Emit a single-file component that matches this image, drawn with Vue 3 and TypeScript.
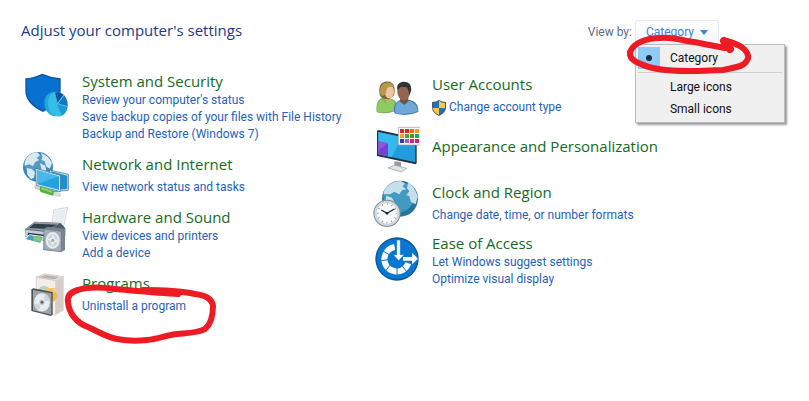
<script setup lang="ts">
import { ref } from 'vue'

interface Category {
  id: string
  title: string
  links: string[]
  shielded?: boolean
}

const left: Category[] = [
  {
    id: 'security',
    title: 'System and Security',
    links: [
      "Review your computer's status",
      'Save backup copies of your files with File History',
      'Backup and Restore (Windows 7)',
    ],
  },
  { id: 'network', title: 'Network and Internet', links: ['View network status and tasks'] },
  { id: 'hardware', title: 'Hardware and Sound', links: ['View devices and printers', 'Add a device'] },
  { id: 'programs', title: 'Programs', links: ['Uninstall a program'] },
]

const right: Category[] = [
  { id: 'users', title: 'User Accounts', links: ['Change account type'], shielded: true },
  { id: 'appearance', title: 'Appearance and Personalization', links: [] },
  { id: 'clock', title: 'Clock and Region', links: ['Change date, time, or number formats'] },
  { id: 'access', title: 'Ease of Access', links: ['Let Windows suggest settings', 'Optimize visual display'] },
]

const columns = [left, right]
const views = ['Category', 'Large icons', 'Small icons']
const view = ref('Category')
const open = ref(true)

const viewBoxes: Record<string, string> = {
  security: '21 21 144 144',
  network: '21 21 144 144',
  hardware: '21 21 144 144',
  programs: '21 15 144 144',
  users: '12 6 144 144',
  appearance: '12 12 144 144',
  clock: '12 6 144 144',
  access: '12 12 144 144',
}

const swatches = [
  '#e8202c', '#e8202c', '#f0691c', '#f49a1c',
  '#f4a21c', '#3fa83c', '#4b9b1c', '#14a878',
  '#3434c8', '#9a62c0', '#dc1c78', '#d81c70',
]

function choose(name: string) {
  view.value = name
  open.value = false
}
</script>

<template>
  <main class="panel">
    <header class="top">
      <h1>Adjust your computer's settings</h1>
      <div class="viewby">
        <span id="viewby-label">View by:</span>
        <div class="picker">
          <button
            class="trigger"
            type="button"
            aria-haspopup="menu"
            aria-labelledby="viewby-label"
            :aria-expanded="open"
            @click="open = !open"
          >
            {{ view }}
            <svg class="caret" viewBox="0 0 8 5" aria-hidden="true"><path d="M0 0h8L4 5z" /></svg>
          </button>
          <div v-if="open" class="menu" role="menu">
            <template v-for="(name, i) in views" :key="name">
              <button
                class="item"
                type="button"
                role="menuitemradio"
                :aria-checked="view === name"
                @click="choose(name)"
              >
                <span class="mark" :class="{ on: view === name }"></span>
                <span>{{ name }}</span>
              </button>
              <hr v-if="i === 0" class="rule" />
            </template>
          </div>
          <svg class="ring ring-view" viewBox="0 0 128 40" aria-hidden="true">
            <path d="M99 14 C88 12 75 9 61 7 C52 5 43 3 34 4 C22 4 8 8 4 18 C3 25 9 28 15 30 C25 35 42 37 61 37 C78 37 88 36 97 36 C108 34 114 33 118 30 C124 25 123 20 118 15 C114 11 108 9 101 7" />
            <path class="thick" d="M98 7 L104 15" />
          </svg>
        </div>
      </div>
    </header>

    <div class="columns">
      <div v-for="(column, c) in columns" :key="c" class="column">
        <section v-for="cat in column" :key="cat.id" class="category">
          <svg class="icon" :viewBox="viewBoxes[cat.id]" aria-hidden="true">
            <g v-if="cat.id === 'security'">
              <path d="M31 43 Q55 41 82 29 Q110 41 137 43 V82 C137 108 116 128 84 144 C52 130 31 107 31 82Z" fill="#0b569f" />
              <path d="M35 47 Q59 45 82 34 Q109 45 133 47 V82 C133 105 113 125 84 139 C55 126 35 105 35 82Z" fill="#0870d0" />
              <ellipse cx="119" cy="120" rx="31" ry="37" transform="rotate(-12 119 120)" fill="#24a5df" />
              <ellipse cx="128" cy="121" rx="29" ry="37" transform="rotate(-12 128 121)" fill="#35bce9" />
              <path d="M126 119 L119 87 Q133 80 146 92Z" fill="#0b549f" />
              <path d="M129 120 L148 94 Q159 109 158 127Z" fill="#1475c2" />
              <path d="M126 120 L158 128 Q155 146 140 154Z" fill="#1b9bd6" />
              <path d="M119 87 L127 119 L158 128 M127 119 L147 93" fill="none" stroke="#5bd0f3" stroke-width="2" />
            </g>

            <g v-else-if="cat.id === 'network'">
              <circle cx="69" cy="69" r="45" fill="#3d88b5" />
              <circle cx="61" cy="60" r="32" fill="#63a9ce" opacity=".55" />
              <path d="M35 42 Q48 25 67 25 L75 34 65 42 73 48 60 55 54 67 43 61 29 65Q27 53 35 42M77 27 Q100 34 111 56 L105 74 94 68 89 52 79 48 83 38ZM35 72 50 75 60 84 57 101 48 106 37 92ZM75 58 91 65 94 80 80 77Z" fill="#d8e9f0" />
              <path d="M103 78 L160 91 V139 L115 143 103 132Z" fill="#d2e8f2" stroke="#2b6688" stroke-width="2" />
              <path d="M108 82 L157 95 V135 L113 139Z" fill="#218ed0" />
              <path d="M61 73 L136 94 V143 L64 124Z" fill="#e6f3f7" stroke="#326983" stroke-width="2" />
              <path d="M65 78 L132 97 V138 L67 121Z" fill="#24a2df" />
              <path d="M65 78 L132 97 L67 120Z" fill="#5bc0ec" opacity=".7" />
              <path d="M60 125 L77 128 V138 L60 134Z" fill="#cdd4d4" stroke="#929b9b" />
              <path d="M77 127 L116 140 Q120 148 113 155 L77 144Q71 135 77 127" fill="#55ad42" />
              <path d="M79 130 L111 141 V147 L78 136Z" fill="#89d66c" />
              <path d="M116 143 L136 148 V157 L116 154Z" fill="#dce2e1" stroke="#9ba4a3" />
            </g>

            <g v-else-if="cat.id === 'hardware'">
              <path d="M111 67 L117 29 L158 22 L145 83Z" fill="#f4f7f9" stroke="#c0c8cf" stroke-width="2" />
              <path d="M120 33 L153 27 L142 76 L115 67Z" fill="#e6ecf1" />
              <path d="M31 87 L59 65 L137 69 L151 85 V107 L101 125 L32 111Z" fill="#515b65" />
              <path d="M32 87 L60 65 L136 69 L96 94Z" fill="#8f9ba6" />
              <path d="M57 71 L126 74 L101 87 L42 84Z" fill="#303d47" />
              <path d="M32 89 L95 96 V121 L32 110Z" fill="#c6ced5" />
              <path d="M39 98 L87 104 V112 L38 105Z" fill="#26333e" />
              <path d="M43 104 L86 110 L76 130 L30 118Z" fill="#40a1d0" stroke="#eef4f6" stroke-width="3" />
              <path d="M53 108 L82 113 L75 125 L57 122Z" fill="#8bc965" />
              <path d="M87 87 L97 80 L150 86 V150 L139 155 L86 149Z" fill="#778592" />
              <path d="M87 87 L139 94 V155 L86 149Z" fill="#a5afb9" stroke="#64727f" stroke-width="2" />
              <ellipse cx="113" cy="121" rx="23" ry="27" fill="#dce2e6" stroke="#8b969f" stroke-width="2" />
              <ellipse cx="113" cy="121" rx="17" ry="21" fill="#ccd4d9" stroke="#f4f6f7" stroke-width="3" />
              <path d="M113 103 L119 116 130 124 117 127 110 139 108 124 97 117 109 115Z" fill="#eef1f3" />
              <circle cx="113" cy="121" r="5" fill="#9ca9b3" />
            </g>

            <g v-else-if="cat.id === 'programs'">
              <path d="M64 36 L90 26 L146 35 L123 47Z" fill="#e3dfdb" stroke="#c8c2bc" stroke-width="2" />
              <path d="M72 37 L93 30 L132 36 L119 43Z" fill="#b8b3ae" />
              <path d="M64 37 L122 47 V150 L64 137Z" fill="#f2eee9" stroke="#c8c2bc" stroke-width="2" />
              <path d="M122 47 L146 36 V136 L122 150Z" fill="#d6cec6" />
              <circle cx="87" cy="79" r="17" fill="#b9d5c3" />
              <circle cx="108" cy="93" r="18" fill="#f6b64d" />
              <path d="M94 69h26v15H94z" fill="#f3c96c" />
              <path d="M49 73 L55 70 L113 81 V149 L108 153 L49 138Z" fill="#4b5155" />
              <path d="M54 75 L109 85 V149 L54 136Z" fill="#9ca4a8" />
              <ellipse cx="81" cy="112" rx="25" ry="29" fill="#e8ecee" stroke="#8b9296" stroke-width="2" />
              <path d="M81 112 L92 86 A25 29 0 0 1 105 106ZM81 112 L70 138 A25 29 0 0 1 57 119Z" fill="#ccd5d8" />
              <ellipse cx="81" cy="112" rx="9" ry="10" fill="#b7c0c4" stroke="#fff" stroke-width="2" />
              <circle cx="81" cy="112" r="4" fill="#596268" />
            </g>

            <g v-else-if="cat.id === 'users'">
              <path d="M26 130 Q22 99 39 88 L55 83 80 94 Q90 107 84 126Q51 137 26 130" fill="#78b454" />
              <path d="M28 128 Q25 103 40 91 L51 101 60 88 76 94 84 122Q53 133 28 128" fill="#91c963" />
              <path d="M47 77 H69 V91 Q60 101 49 91Z" fill="#dca987" />
              <path d="M35 78 Q29 42 51 38 Q75 34 79 55 Q82 73 76 82 L62 91 Q40 91 35 78" fill="#80652e" />
              <ellipse cx="64" cy="68" rx="14" ry="20" fill="#f0c5a7" />
              <path d="M36 65 Q37 43 55 41 Q73 38 78 55 Q62 50 57 59 Q56 72 47 80Q35 82 36 65" fill="#b59a4c" />
              <path d="M79 133 Q73 107 91 95 L103 90 130 94 Q153 103 151 129 Q117 144 79 133" fill="#477eaf" />
              <path d="M82 132 Q78 106 94 97 L109 108 124 95 Q148 103 149 127Q116 140 82 132" fill="#70a9d8" />
              <path d="M96 81 H121 V96 L109 107 96 97Z" fill="#765141" />
              <ellipse cx="107" cy="68" rx="19" ry="26" fill="#926650" />
              <path d="M88 64 Q83 42 105 38 Q131 37 130 63 L124 80 Q122 60 116 55 L99 53Z" fill="#303438" />
            </g>

            <g v-else-if="cat.id === 'appearance'">
              <path d="M79 121 L99 123 V138 L79 136Z" fill="#91999f" />
              <path d="M61 141 L80 132 L116 142 L100 153Z" fill="#e0e4e7" stroke="#8b969e" stroke-width="2" />
              <path d="M27 29 L32 27 L146 52 V126 L143 130 L27 105Z" fill="#26323d" />
              <path d="M31 33 L142 57 V124 L31 100Z" fill="#239bdc" />
              <path d="M31 33 L101 48 L71 109 L31 100Z" fill="#35b8ed" />
              <path d="M31 61 L60 67 V106 L31 100Z" fill="#7741cd" />
              <path d="M31 61 L60 67 L31 88Z" fill="#9058dd" />
              <path d="M91 19 H158 V72 H91Z" fill="#f7f7f7" stroke="#9d9d9d" stroke-width="2" />
              <rect
                v-for="(color, s) in swatches"
                :key="s"
                :x="96 + (s % 4) * 15"
                :y="24 + Math.floor(s / 4) * 15"
                width="12"
                height="12"
                :fill="color"
              />
            </g>

            <g v-else-if="cat.id === 'clock'">
              <circle cx="96" cy="65" r="54" fill="#24749f" />
              <circle cx="92" cy="60" r="46" fill="#429ac3" />
              <path d="M57 29 Q72 12 99 12 L111 20 103 28 115 37 102 40 94 52 79 44 66 52 46 52 Q48 36 57 29M120 16 Q143 31 149 60 L143 82 129 75 124 58 115 54 124 43 117 34ZM55 56 72 62 79 75 70 79 53 68Z" fill="#c6dfea" />
              <circle cx="57" cy="109" r="41" fill="#7f8e98" />
              <circle cx="57" cy="109" r="38" fill="#d2dadd" />
              <circle cx="57" cy="109" r="33" fill="#f8f9f9" stroke="#b7c2c7" stroke-width="2" />
              <circle cx="57" cy="109" r="28" fill="none" stroke="#59666e" stroke-width="5" stroke-dasharray="2 12.66" stroke-dashoffset="1" />
              <path d="M40 99 L57 109 L79 96" fill="none" stroke="#202a31" stroke-width="4" />
              <circle cx="57" cy="109" r="4" fill="#202a31" />
            </g>

            <g v-else>
              <circle cx="87" cy="90" r="65" fill="#095596" />
              <circle cx="87" cy="90" r="61" fill="#0877d2" />
              <path d="M80 54 A37 37 0 1 0 121 103" fill="none" stroke="#fff" stroke-width="18" />
              <path d="M42 64 L64 77 M38 95 L62 92 M54 125 L69 104 M87 140 V116 M116 128 L101 109" stroke="#0877d2" stroke-width="3" />
              <path d="M86 33 H97 V77 H109 L92 95 L76 77 H86Z" fill="#fff" stroke="#0877d2" stroke-width="2" />
              <path d="M105 84 H132 V71 L150 89 L132 106 V95 H105Z" fill="#fff" />
            </g>
          </svg>

          <div class="text" :class="['links-' + cat.links.length]">
            <h2><a href="#">{{ cat.title }}</a></h2>
            <ul v-if="cat.links.length">
              <li v-for="link in cat.links" :key="link">
                <svg v-if="cat.shielded" class="uac" viewBox="0 0 14 16" aria-hidden="true">
                  <path d="M0 2 Q4 2 7 0 Q10 2 14 2 V7 Q14 13 7 16 Q0 13 0 7Z" fill="#4c5763" />
                  <path d="M1 3 Q4 3 7 1 V8 H1Z" fill="#1e6fc8" />
                  <path d="M7 1 Q10 3 13 3 V8 H7Z" fill="#fbc93d" />
                  <path d="M1 8 H7 V15 Q1 12 1 8Z" fill="#fbc93d" />
                  <path d="M7 8 H13 Q13 12 7 15Z" fill="#1e6fc8" />
                </svg>
                <a href="#">{{ link }}</a>
              </li>
            </ul>
          </div>

          <svg v-if="cat.id === 'programs'" class="ring ring-programs" viewBox="0 0 156 60" aria-hidden="true">
            <path d="M115 10 C95 9 75 7 52 5 C38 3 24 3 15 6 C8 8 4 12 5 18 C6 30 14 39 25 43 C34 47 43 53 54 55 C64 57 74 57 84 56 C95 55 104 51 114 50 C125 49 135 49 142 45 C149 39 150 30 150 22 C149 14 141 11 132 10 C118 7 104 6 80 6" />
          </svg>
        </section>
      </div>
    </div>
  </main>
</template>

<style>
body {
  margin: 0;
  background: #fff;
}
</style>

<style scoped>
.panel {
  box-sizing: border-box;
  min-height: 100vh;
  padding: 20px 21px;
  font-family: Roboto, "Open Sans", sans-serif;
  font-size: 12px;
  line-height: 17px;
}

.top {
  display: flex;
  justify-content: space-between;
  align-items: flex-start;
  height: 24px;
  padding-right: 69px;
  margin-bottom: 27px;
}

h1,
h2 {
  margin: 0;
  font-family: "Open Sans", "Noto Sans", sans-serif;
  font-size: 15px;
  font-weight: 400;
  line-height: 20px;
  white-space: nowrap;
}

h1 {
  color: #1c3a86;
}

h2 {
  margin-bottom: 1px;
}

.viewby {
  display: flex;
  align-items: center;
  gap: 3px;
  color: #5a6b85;
}

.picker {
  position: relative;
}

button {
  font: inherit;
  cursor: default;
}

.trigger {
  display: flex;
  align-items: center;
  gap: 6px;
  height: 24px;
  padding: 0 10px;
  border: 1px solid #e2ebf5;
  border-radius: 2px;
  background: linear-gradient(#fff, #f3f7fc);
  color: #4384d8;
}

.caret {
  width: 8px;
  height: 5px;
  fill: #3f82d8;
}

.menu {
  position: absolute;
  top: 24px;
  left: 0;
  z-index: 1;
  box-sizing: border-box;
  width: 150px;
  padding: 2px;
  border: 1px solid #bcbcbc;
  background: #f0f0f0;
  box-shadow: 2px 2px 2px #9c9c9c;
}

.item {
  display: flex;
  align-items: center;
  gap: 10px;
  width: 100%;
  height: 22px;
  padding: 0;
  border: 0;
  background: none;
  color: #111;
}

.mark {
  display: grid;
  place-items: center;
  width: 22px;
  height: 22px;
}

.mark.on {
  background: #91c9f7;
}

.mark.on::after {
  content: "";
  width: 6px;
  height: 6px;
  border-radius: 50%;
  background: #12303f;
}

.rule {
  margin: 3px 0;
  border: 0;
  border-top: 1px solid #d0d0d0;
}

.columns {
  display: grid;
  grid-template-columns: minmax(0, 350px) minmax(0, 1fr);
  padding-left: 1px;
}

.column {
  display: flex;
  flex-direction: column;
  gap: 8px;
}

.column + .column {
  gap: 6px;
}

.category {
  position: relative;
  display: flex;
  gap: 12px;
  min-height: 48px;
}

.icon {
  flex: none;
  width: 48px;
  height: 48px;
}

.links-0,
.links-1 {
  align-self: center;
}

.links-0 {
  padding-bottom: 6px;
}

.links-1 ul {
  padding-top: 4px;
}

ul {
  margin: 0;
  padding: 0;
  list-style: none;
}

li {
  display: flex;
  align-items: center;
  gap: 3px;
  white-space: nowrap;
}

a {
  color: #1f62b8;
  text-decoration: none;
}

a:hover {
  text-decoration: underline;
}

h2 a {
  color: #146b1e;
}

.uac {
  width: 14px;
  height: 16px;
}

.ring {
  position: absolute;
  z-index: 2;
  overflow: visible;
  fill: none;
  stroke: #ed1c24;
  stroke-width: 6;
  stroke-linecap: round;
  stroke-linejoin: round;
  pointer-events: none;
}

.ring .thick {
  stroke-width: 8;
}

.ring-view {
  top: 14px;
  left: -9px;
  width: 128px;
  height: 40px;
}

.ring-programs {
  top: 14px;
  left: 41px;
  width: 156px;
  height: 60px;
}
</style>
